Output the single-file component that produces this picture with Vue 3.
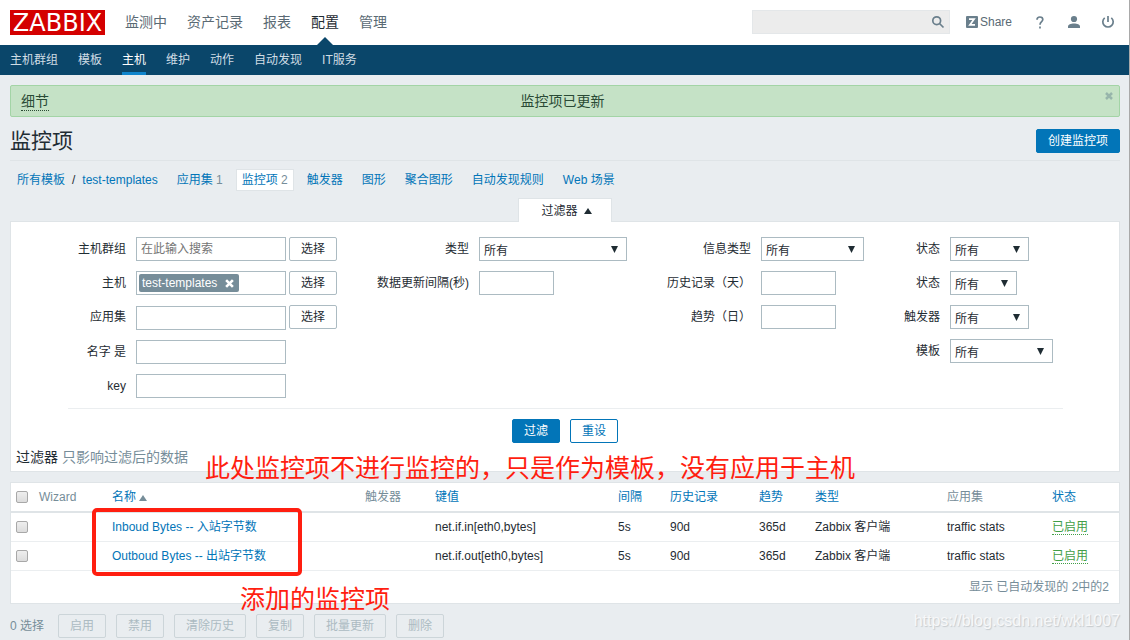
<script setup>
import { ref } from 'vue'

const mainMenu = ['监测中', '资产记录', '报表', '配置', '管理']
const subMenu = ['主机群组', '模板', '主机', '维护', '动作', '自动发现', 'IT服务']
const crumbs = [
  { label: '应用集', count: 1 },
  { label: '监控项', count: 2, active: true },
  { label: '触发器' },
  { label: '图形' },
  { label: '聚合图形' },
  { label: '自动发现规则' },
  { label: 'Web 场景' },
]
const filterColumns = [
  {
    name: 'hosts',
    fields: [
      { id: 'group', label: '主机群组', kind: 'text', size: 'wide', placeholder: '在此输入搜索', pick: true },
      { id: 'host', label: '主机', kind: 'tags', tag: 'test-templates', pick: true },
      { id: 'app', label: '应用集', kind: 'text', size: 'wide', pick: true },
      { id: 'name', label: '名字 是', kind: 'text', size: 'wide' },
      { id: 'key', label: 'key', kind: 'text', size: 'wide' },
    ],
  },
  {
    name: 'type',
    fields: [
      { id: 'type', label: '类型', kind: 'select', size: 'w148' },
      { id: 'delay', label: '数据更新间隔(秒)', kind: 'text', size: 'short' },
    ],
  },
  {
    name: 'info',
    fields: [
      { id: 'info', label: '信息类型', kind: 'select', size: 'w103' },
      { id: 'history', label: '历史记录（天）', kind: 'text', size: 'short' },
      { id: 'trends', label: '趋势（日）', kind: 'text', size: 'short' },
    ],
  },
  {
    name: 'state',
    fields: [
      { id: 'status', label: '状态', kind: 'select', size: 'w79' },
      { id: 'state', label: '状态', kind: 'select', size: 'w67' },
      { id: 'triggers', label: '触发器', kind: 'select', size: 'w79' },
      { id: 'template', label: '模板', kind: 'select', size: 'w103' },
    ],
  },
]
const items = ref([
  { name: 'Inboud Bytes -- 入站字节数', key: 'net.if.in[eth0,bytes]', checked: false },
  { name: 'Outboud Bytes -- 出站字节数', key: 'net.if.out[eth0,bytes]', checked: false },
])
const actions = ['启用', '禁用', '清除历史', '复制', '批量更新', '删除']
</script>

<template>
  <div class="page">
    <header class="top">
      <a class="logo" href="#">ZABBIX</a>
      <nav class="main-menu">
        <a v-for="m in mainMenu" :key="m" href="#" :class="{ active: m === '配置' }">{{ m }}</a>
      </nav>
      <form class="search" @submit.prevent>
        <input type="text" aria-label="搜索" />
        <button type="submit" aria-label="搜索">
          <svg width="14" height="14" viewBox="0 0 14 14"><circle cx="5.7" cy="5.7" r="3.9" /><path d="M8.500 8.500l4 4" /></svg>
        </button>
      </form>
      <a class="share" href="#">
        <svg width="12" height="12" viewBox="0 0 12 12"><rect width="12" height="12" rx="1" /><path d="M3 3.200h5L4 8.800h5" /></svg>Share
      </a>
      <a class="icon help" href="#" aria-label="帮助">
        <svg width="8" height="13" viewBox="0 0 8 13"><path d="M1 3.700C1 2 2.200 1 3.900 1S6.800 2 6.800 3.500C6.800 5.600 4 5.700 4 8.700M4 10.600v2" /></svg>
      </a>
      <a class="icon user" href="#" aria-label="用户">
        <svg width="14" height="14" viewBox="0 0 14 14"><circle cx="7" cy="4" r="3.1" /><path d="M1 13v-1.500C1 9.700 3.700 8.600 7 8.600s6 1.100 6 2.900V13z" /></svg>
      </a>
      <a class="icon power" href="#" aria-label="退出">
        <svg width="14" height="14" viewBox="0 0 14 14"><path d="M3.700 2.800a5.200 5.200 0 1 0 6.600 0M7 1v6" /></svg>
      </a>
    </header>

    <nav class="sub-menu">
      <a v-for="m in subMenu" :key="m" href="#" :class="{ active: m === '主机' }">{{ m }}</a>
    </nav>

    <main>
      <div class="message">
        <a href="#" class="details">细节</a>
        <span>监控项已更新</span>
        <button type="button" aria-label="关闭">
          <svg width="8" height="8" viewBox="0 0 8 8"><path d="M1 1l6 6M7 1L1 7" /></svg>
        </button>
      </div>

      <div class="title">
        <h1>监控项</h1>
        <button type="button" class="btn primary">创建监控项</button>
      </div>

      <nav class="crumbs">
        <div class="path"><a href="#">所有模板</a><span>/</span><a href="#">test-templates</a></div>
        <div v-for="c in crumbs" :key="c.label" :class="['crumb', { active: c.active }]">
          <a href="#">{{ c.label }}</a><small v-if="c.count">&nbsp;{{ c.count }}</small>
        </div>
      </nav>

      <div class="filter-tab">
        <button type="button">过滤器<svg width="8" height="6" viewBox="0 0 8 6"><path d="M0 6l4-6 4 6z" /></svg></button>
      </div>
      <form class="filter" @submit.prevent>
        <div class="fields">
          <div v-for="col in filterColumns" :key="col.name" :class="['column', col.name]">
            <div v-for="f in col.fields" :key="f.id" class="field">
              <label :for="f.id">{{ f.label }}</label>
              <div v-if="f.kind === 'select'" :class="['select', f.size]">
                <select :id="f.id"><option>所有</option></select>
                <svg width="7" height="7" viewBox="0 0 7 7"><path d="M0 0h7L3.500 7z" /></svg>
              </div>
              <div v-else-if="f.kind === 'tags'" class="tags">
                <span class="tag">{{ f.tag }}<button type="button" aria-label="移除"><svg width="9" height="9" viewBox="0 0 8 8"><path d="M1 1l6 6M7 1L1 7" /></svg></button></span>
                <input :id="f.id" type="text" />
              </div>
              <input v-else :id="f.id" type="text" :class="['text', f.size]" :placeholder="f.placeholder" />
              <button v-if="f.pick" type="button" class="btn pick">选择</button>
            </div>
          </div>
        </div>
        <div class="filter-actions">
          <button type="submit" class="btn primary">过滤</button>
          <button type="reset" class="btn outline">重设</button>
        </div>
        <p class="hint"><b>过滤器</b> 只影响过滤后的数据</p>
        <p class="note note-top">此处监控项不进行监控的，只是作为模板，没有应用于主机</p>
      </form>

      <section class="list">
        <table>
          <colgroup>
            <col class="c-check" /><col class="c-wizard" /><col class="c-name" /><col class="c-trigger" /><col class="c-key" />
            <col class="c-delay" /><col class="c-history" /><col class="c-trend" /><col class="c-type" /><col class="c-app" /><col class="c-status" />
          </colgroup>
          <thead>
            <tr>
              <th><input type="checkbox" aria-label="全选" /></th>
              <th>Wizard</th>
              <th><a href="#">名称<svg width="8" height="6" viewBox="0 0 8 6"><path d="M0 6l4-6 4 6z" /></svg></a></th>
              <th>触发器</th>
              <th><a href="#">键值</a></th>
              <th><a href="#">间隔</a></th>
              <th><a href="#">历史记录</a></th>
              <th><a href="#">趋势</a></th>
              <th><a href="#">类型</a></th>
              <th>应用集</th>
              <th><a href="#">状态</a></th>
            </tr>
          </thead>
          <tbody>
            <tr v-for="it in items" :key="it.key">
              <td><input v-model="it.checked" type="checkbox" :aria-label="it.name" /></td>
              <td></td>
              <td><a href="#">{{ it.name }}</a></td>
              <td></td>
              <td>{{ it.key }}</td>
              <td>5s</td>
              <td>90d</td>
              <td>365d</td>
              <td>Zabbix 客户端</td>
              <td>traffic stats</td>
              <td><a href="#" class="enabled">已启用</a></td>
            </tr>
          </tbody>
        </table>
        <div class="total">显示 已自动发现的 2中的2</div>
        <div class="frame"></div>
        <p class="note note-bottom">添加的监控项</p>
      </section>

      <footer>
        <span>0 选择</span>
        <button v-for="a in actions" :key="a" type="button" class="btn" disabled>{{ a }}</button>
        <div class="watermark">https://blog.csdn.net/wkl1007</div>
      </footer>
    </main>
  </div>
</template>

<style>
body {
  margin: 0;
  background: #e9edf0;
  overflow: hidden;
}
</style>

<style scoped>
.page {
  min-height: 100vh;
  box-sizing: border-box;
  border-right: 1px solid #a9a9a9;
  background: #e9edf0;
  color: #1f2c33;
  font: 12px/18px "Liberation Sans", "Noto Sans CJK SC", sans-serif;
}
a {
  color: #0275b8;
  text-decoration: none;
}
button,
input,
select {
  font: inherit;
  color: inherit;
  box-sizing: border-box;
}
svg {
  display: block;
}
p,
h1 {
  margin: 0;
}
.top {
  display: flex;
  align-items: center;
  height: 44px;
  padding: 0 14px 1px 10px;
  background: #fff;
}
.logo {
  align-self: flex-start;
  width: 95px;
  height: 25px;
  margin-top: 10px;
  background: #d40000;
  color: #fff;
  font: 24px/26px "DejaVu Sans", sans-serif;
  text-align: center;
}
.main-menu {
  display: flex;
  align-self: flex-start;
  gap: 20px;
  margin: 0 auto 0 20px;
  font-size: 14px;
  line-height: 45px;
}
.main-menu a {
  position: relative;
  color: #5a6a74;
}
.main-menu .active {
  color: #1f2c33;
}
.main-menu .active::after {
  content: "";
  position: absolute;
  bottom: 0;
  left: 6px;
  border: 8px solid transparent;
  border-top: 0;
  border-bottom-color: #0a466a;
}
.search {
  position: relative;
  width: 198px;
  margin-right: 16px;
}
.search input {
  display: block;
  width: 100%;
  height: 24px;
  padding: 0 28px 0 6px;
  border: 1px solid #e4e7e9;
  background: #ececec;
}
.search button {
  position: absolute;
  top: 5px;
  right: 5px;
  padding: 0;
  border: 0;
  background: none;
}
.search svg,
.help svg,
.power svg {
  fill: none;
  stroke: #6a7f8c;
  stroke-width: 1.7;
}
.share {
  display: flex;
  align-items: center;
  gap: 2px;
  margin-right: 24px;
  color: #5a6a74;
}
.share rect,
.user svg {
  fill: #6a7f8c;
}
.share path {
  fill: none;
  stroke: #fff;
  stroke-width: 1.8;
}
.icon + .icon {
  margin-left: 20px;
}
.help {
  margin-right: 3px;
}
.sub-menu {
  display: flex;
  gap: 20px;
  padding: 0 10px;
  background: #0a466a;
  line-height: 30px;
}
.sub-menu a {
  height: 30px;
  color: #d0dde5;
}
.sub-menu .active {
  box-shadow: inset 0 -3px #0f84cc;
  color: #fff;
}
main {
  padding: 10px 9px 0 10px;
}
.message {
  position: relative;
  display: flex;
  height: 32px;
  box-sizing: border-box;
  padding: 0 10px;
  justify-content: center;
  align-items: center;
  border: 1px solid #a3d4a6;
  border-radius: 2px;
  background: #c5e2c6;
  color: #2a4a35;
  font-size: 14px;
}
.details {
  position: absolute;
  left: 10px;
  top: 6px;
  border-bottom: 1px dotted #2a4a35;
  color: inherit;
}
.message > span {
  padding-right: 5px;
}
.message button {
  position: absolute;
  top: 6px;
  right: 6px;
  padding: 0;
  border: 0;
  background: none;
}
.message svg {
  fill: none;
  stroke: #97b5ab;
  stroke-width: 2.5;
}
.title {
  display: flex;
  justify-content: space-between;
  align-items: center;
  height: 43px;
  border-bottom: 1px solid #dfe4e7;
}
.title .btn,
h1 {
  margin-top: 4px;
}
h1 {
  font-size: 21px;
  line-height: 28px;
  font-weight: 400;
}
.btn {
  height: 24px;
  padding: 0 11px;
  border: 1px solid #acbbc2;
  border-radius: 2px;
  background: #fff;
  line-height: 22px;
}
.btn.primary {
  border-color: #0275b8;
  background: #0275b8;
  color: #fff;
}
.btn.outline {
  border-color: #0275b8;
  color: #0275b8;
}
.btn:disabled {
  background: none;
  border-color: #ccd5d9;
  color: #acbbc2;
}
.crumbs {
  display: flex;
  align-items: center;
  gap: 7px;
  height: 22px;
  padding: 8px 7px 7px;
}
.path {
  display: flex;
  gap: 7px;
  margin-right: 6px;
}
.crumb {
  padding: 1px 5px;
  border: 1px solid transparent;
}
.crumb small {
  color: #768d99;
  font-size: 12px;
}
.crumb.active {
  border-color: #dfe4e7;
  background: #fff;
}
.filter-tab {
  position: relative;
  z-index: 1;
  display: flex;
  justify-content: center;
  margin-bottom: -1px;
}
.filter-tab button {
  display: flex;
  align-items: center;
  gap: 6px;
  height: 24px;
  padding: 0 19px 0 22px;
  border: 1px solid #dfe4e7;
  border-bottom: 0;
  background: #fff;
}
.filter-tab svg {
  fill: #1f2c33;
}
.filter {
  position: relative;
  padding: 15px 5px;
  padding-bottom: 5px;
  border: 1px solid #dfe4e7;
  background: #fff;
}
.fields {
  display: grid;
  grid-template-columns: 303fr 290fr 237fr 165fr;
  margin: 0 51px 0 52px;
  padding-bottom: 10px;
  border-bottom: 1px solid #ebeef0;
}
.column {
  display: flex;
  flex-direction: column;
  gap: 10px;
}
.field {
  display: flex;
  align-items: flex-end;
  height: 24px;
}
.hosts .field:nth-child(3) {
  height: 25px;
}
.field label {
  flex: none;
  align-self: flex-start;
  margin-right: 10px;
  line-height: 24px;
  text-align: right;
  white-space: nowrap;
}
.hosts label {
  width: 58px;
}
.type label {
  width: 98px;
}
.info label {
  width: 90px;
}
.state label {
  width: 42px;
}
.text,
.tags {
  height: 24px;
  padding: 0 4px;
  border: 1px solid #acbbc2;
  background: #fff;
}
.wide,
.tags {
  width: 150px;
}
.short {
  width: 75px;
}
.text::placeholder {
  color: #757575;
}
.tags {
  display: flex;
  box-sizing: border-box;
  padding: 2px;
}
.tags input {
  flex: 1;
  min-width: 0;
  border: 0;
  padding: 0;
}
.tag {
  display: flex;
  align-items: center;
  gap: 8px;
  padding: 0 5px 0 3px;
  border-radius: 2px;
  background: #768d99;
  color: #fff;
}
.tag button {
  padding: 0;
  border: 0;
  background: none;
}
.tag svg {
  stroke: #fff;
  stroke-width: 2.3;
}
.pick {
  align-self: flex-start;
  margin-left: 3px;
}
.select {
  position: relative;
}
.select select {
  display: block;
  width: 100%;
  height: 24px;
  padding: 4px 4px 0;
  appearance: none;
  border: 1px solid #acbbc2;
  border-radius: 0;
  background: #fff;
}
.select svg {
  position: absolute;
  top: 9px;
  right: 9px;
  fill: #1f2c33;
  pointer-events: none;
}
.w148 {
  width: 148px;
}
.w103 {
  width: 103px;
}
.w79 {
  width: 79px;
}
.w67 {
  width: 67px;
}
.filter-actions {
  display: flex;
  justify-content: center;
  gap: 10px;
  padding-top: 10px;
}
.hint {
  padding-top: 5px;
  color: #768d99;
  font-size: 14px;
}
.hint b {
  color: #1f2c33;
  font-weight: 400;
}
.note {
  position: absolute;
  color: #ff1e10;
  font-size: 25px;
  line-height: 32px;
  white-space: nowrap;
}
.note-top {
  left: 194px;
  bottom: -13px;
}
.note-bottom {
  left: 229px;
  bottom: -12px;
}
.list {
  position: relative;
  margin-top: 10px;
  border: 1px solid #dfe4e7;
  background: #fff;
}
table {
  width: 100%;
  border-collapse: collapse;
  table-layout: fixed;
}
th,
td {
  height: 28px;
  padding: 0 0 0 5px;
  border-bottom: 1px solid #ebeef0;
  font-weight: 400;
  text-align: left;
  white-space: nowrap;
}
th {
  border-bottom: 2px solid #dfe4e7;
  color: #768d99;
}
th svg {
  display: inline-block;
  margin-left: 3px;
  fill: #768d99;
}
.c-check { width: 23px; }
.c-wizard { width: 73px; }
.c-name { width: 253px; }
.c-trigger { width: 70px; }
.c-key { width: 183px; }
.c-delay { width: 52px; }
.c-history { width: 89px; }
.c-trend { width: 56px; }
.c-type { width: 132px; }
.c-app { width: 105px; }
input[type="checkbox"] {
  display: block;
  width: 12px;
  height: 12px;
  margin: 0;
  appearance: none;
  border: 1px solid #a8a8a8;
  border-radius: 2px;
  background: linear-gradient(#eee, #dcdcdc);
}
input[type="checkbox"]:checked {
  background: #0275b8;
}
.enabled {
  border-bottom: 1px dotted #429e47;
  color: #429e47;
}
.total {
  padding: 7px 10px;
  color: #768d99;
  text-align: right;
}
.frame {
  position: absolute;
  top: 25px;
  left: 81px;
  width: 202px;
  height: 60px;
  border: 4px solid #ff1e10;
  border-radius: 5px;
}
footer {
  position: relative;
  display: flex;
  align-items: center;
  gap: 10px;
  padding-top: 10px;
  color: #768d99;
}
footer span {
  margin-right: 4px;
}
.watermark {
  position: absolute;
  right: 0;
  bottom: 8px;
  color: #f7f8f9;
  font-size: 16px;
  text-shadow: 1px 1px 1px #c5cacd;
}
</style>
